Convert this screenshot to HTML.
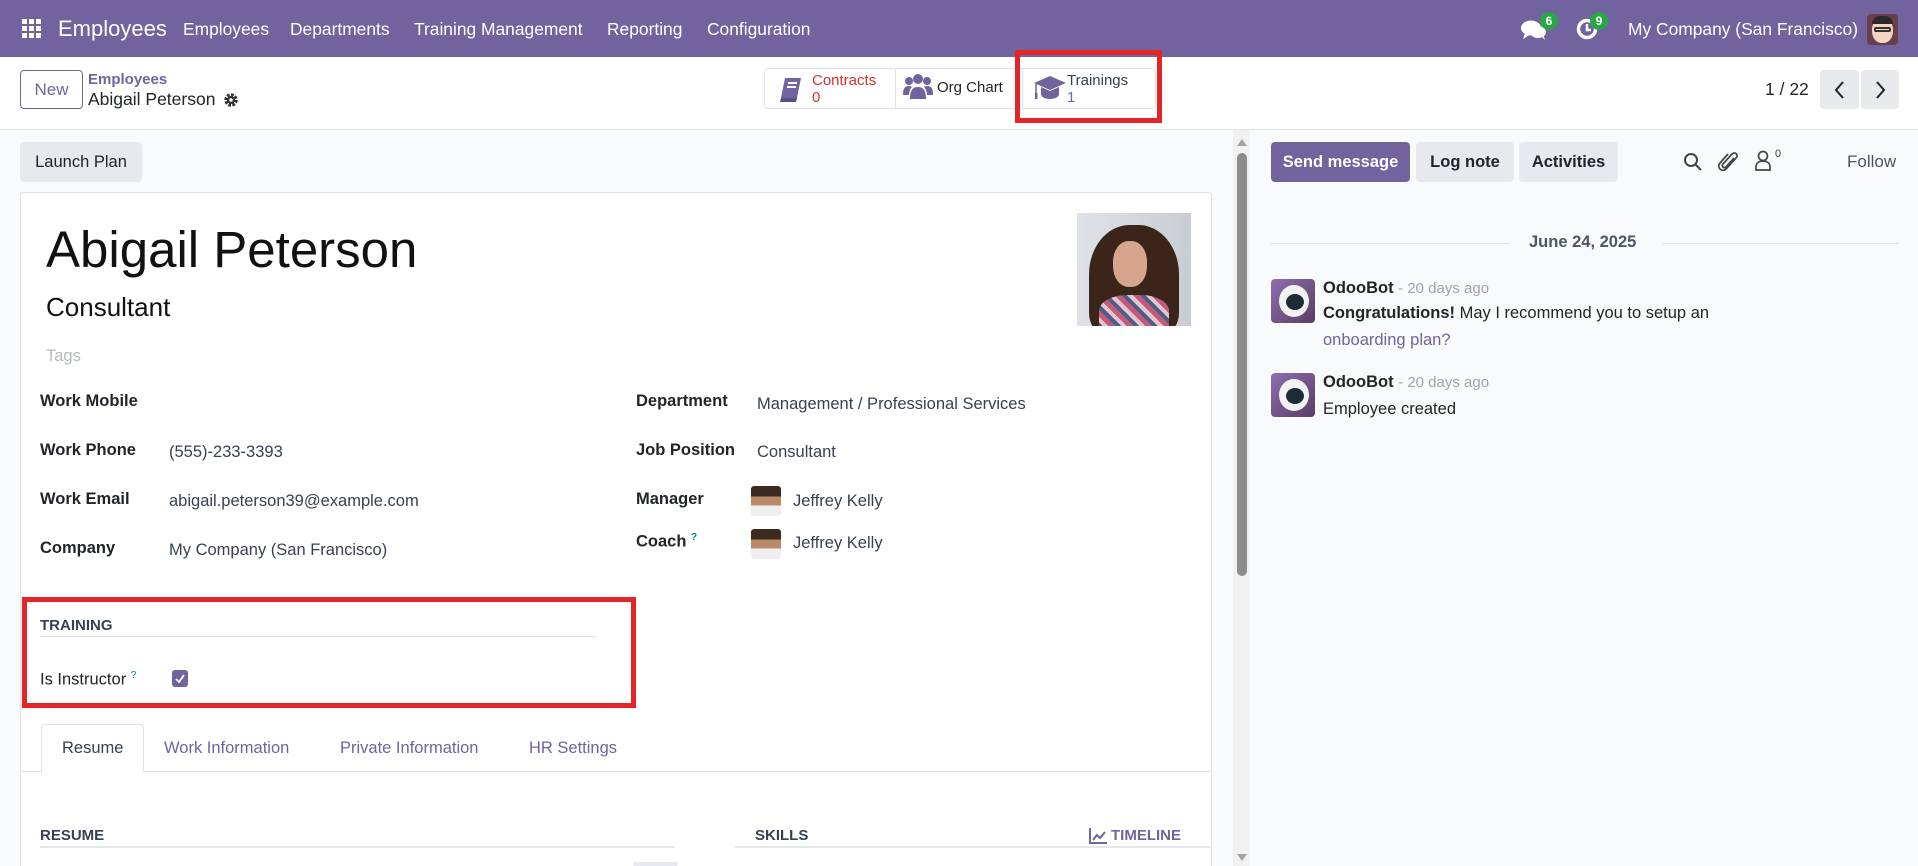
<!DOCTYPE html>
<html><head><meta charset="utf-8"><style>
*{box-sizing:border-box;margin:0;padding:0}
html{width:1918px;height:866px;overflow:hidden}
body{width:1918px;height:866px;overflow:hidden;font-family:"Liberation Sans",sans-serif;color:#212529;background:#f9fafb;position:relative;font-size:16.5px}
.a{position:absolute;white-space:nowrap}
.nav{position:absolute;left:0;top:0;width:1918px;height:57px;background:#71639e;color:#fff}
.nav .a{font-size:17.4px;top:19px}
.cp{position:absolute;left:0;top:57px;width:1918px;height:73px;background:#fff;border-bottom:1px solid #dee2e6}
.btn2{position:absolute;background:#e7e9ed;border-radius:4px;font-size:16.5px;color:#212529;text-align:center}
.lbl{font-weight:bold;font-size:16.5px}
.val{font-size:16.5px;color:#374151}
.badge{position:absolute;background:#28a745;color:#fff;font-size:12px;border-radius:9px;width:18px;height:18px;text-align:center;line-height:18px;font-weight:bold}
.pp{position:absolute;width:30px;height:30px;border-radius:3px;background:linear-gradient(#3a2a20 0 35%,#b88a6a 35% 65%,#eee 65%)}
.bot{position:absolute;width:44px;height:44px;border-radius:4px;background:linear-gradient(135deg,#8d6fb0,#5a3d63)}
.bot:before{content:"";position:absolute;left:8px;top:6px;width:30px;height:32px;border-radius:50%;background:#f2f2f2}
.bot:after{content:"";position:absolute;left:15px;top:15px;width:18px;height:16px;border-radius:50%;background:#1d2b36}
</style></head><body>
<div class="nav">
 <svg class="a" style="left:22px;top:19px" width="20" height="20" viewBox="0 0 20 20" fill="#fff"><rect x="0" y="0" width="5" height="5"/><rect x="7" y="0" width="5" height="5"/><rect x="14" y="0" width="5" height="5"/><rect x="0" y="7" width="5" height="5"/><rect x="7" y="7" width="5" height="5"/><rect x="14" y="7" width="5" height="5"/><rect x="0" y="14" width="5" height="5"/><rect x="7" y="14" width="5" height="5"/><rect x="14" y="14" width="5" height="5"/></svg>
 <div class="a" style="left:58px;top:16px;font-size:22px">Employees</div>
 <div class="a" style="left:183px">Employees</div>
 <div class="a" style="left:290px">Departments</div>
 <div class="a" style="left:414px">Training Management</div>
 <div class="a" style="left:607px">Reporting</div>
 <div class="a" style="left:707px">Configuration</div>
 <svg class="a" style="left:1521px;top:19px" width="26" height="22" viewBox="0 0 26 22" fill="#fff"><ellipse cx="10" cy="9" rx="10" ry="7.5"/><path d="M4 14 L2 20 L10 15Z"/><ellipse cx="17" cy="13" rx="8" ry="6"/><path d="M20 17 L24 21 L22 15Z"/></svg>
 <div class="badge" style="left:1540px;top:12px">6</div>
 <svg class="a" style="left:1576px;top:18px" width="22" height="22" viewBox="0 0 22 22"><circle cx="11" cy="11" r="8.5" fill="none" stroke="#fff" stroke-width="3.5"/><path d="M11 6v6h4" stroke="#fff" stroke-width="2.5" fill="none"/></svg>
 <div class="badge" style="left:1590px;top:12px">9</div>
 <div class="a" style="left:1628px">My Company (San Francisco)</div>
 <div class="a" style="left:1867px;top:14px;width:31px;height:31px;border-radius:4px;background:#6b3d4c">
  <div style="position:absolute;left:5px;top:3px;width:21px;height:26px;border-radius:50% 50% 45% 45%;background:#f3d6c0"></div>
  <div style="position:absolute;left:5px;top:2px;width:21px;height:8px;border-radius:8px 8px 0 0;background:#2a2a2a"></div>
  <div style="position:absolute;left:7px;top:13px;width:17px;height:5px;border:2px solid #333;border-radius:2px"></div>
 </div>
</div>
<div class="cp">
 <div class="a" style="left:20px;top:13px;width:63px;height:39px;border:1px solid #71639e;border-radius:4px;color:#71639e;text-align:center;line-height:37px;font-size:17px">New</div>
 <div class="a" style="left:88px;top:14px;color:#71639e;font-weight:bold;font-size:15px">Employees</div>
 <div class="a" style="left:88px;top:32px;font-size:17.5px">Abigail Peterson</div>
 <svg class="a" style="left:223px;top:35px" width="16" height="16" viewBox="0 0 16 16"><circle cx="8" cy="8" r="5" fill="none" stroke="#333" stroke-width="3.5" stroke-dasharray="2.6 1.3"/><circle cx="8" cy="8" r="4" fill="#333"/><circle cx="8" cy="8" r="1.8" fill="#fff"/></svg>
 <div class="a" style="left:764px;top:11px;width:392px;height:41px;border:1px solid #dee2e6;border-radius:4px"></div>
 <div class="a" style="left:895px;top:12px;width:1px;height:39px;background:#dee2e6"></div>
 <div class="a" style="left:1022px;top:12px;width:1px;height:39px;background:#dee2e6"></div>
 <svg class="a" style="left:779px;top:20px" width="24" height="26" viewBox="0 0 24 26"><path d="M6 1h16l-4 20H2z" fill="#71639e"/><path d="M2 21h16l-1 4H1z" fill="#5a4f85"/><path d="M9 6h9M8 10h9" stroke="#fff" stroke-width="2"/></svg>
 <div class="a" style="left:812px;top:15px;color:#d9302f;font-size:15px;line-height:17px">Contracts<br>0</div>
 <svg class="a" style="left:903px;top:16px" width="30" height="26" viewBox="0 0 30 26" fill="#71639e"><circle cx="15" cy="6" r="5"/><circle cx="6" cy="8" r="4"/><circle cx="24" cy="8" r="4"/><path d="M7 26c0-9 3-12 8-12s8 3 8 12z"/><path d="M0 22c0-7 2-9 6-9 2 0 3 1 3 1-2 2-3 5-3 8z"/><path d="M30 22c0-7-2-9-6-9-2 0-3 1-3 1 2 2 3 5 3 8z"/></svg>
 <div class="a" style="left:937px;top:22px;font-size:15px">Org Chart</div>
 <svg class="a" style="left:1033px;top:17px" width="34" height="28" viewBox="0 0 34 28" fill="#71639e"><path d="M17 2L33 9 17 16 1 9z"/><path d="M8 13v7c0 3 4 5 9 5s9-2 9-5v-7l-9 4z"/><path d="M3 10v10" stroke="#71639e" stroke-width="1.5"/><rect x="2" y="19" width="2.5" height="6"/></svg>
 <div class="a" style="left:1067px;top:15px;color:#374151;font-size:15px;line-height:17px">Trainings<br><span style="color:#71639e">1</span></div>
 <div class="a" style="left:1765px;top:22px;font-size:17.5px">1 / 22</div>
 <div class="btn2" style="left:1820px;top:13px;width:39px;height:39px"></div>
 <div class="btn2" style="left:1861px;top:13px;width:38px;height:39px"></div>
 <svg class="a" style="left:1833px;top:23px" width="14" height="20" viewBox="0 0 14 20"><path d="M10 2L3 10l7 8" fill="none" stroke="#222" stroke-width="2"/></svg>
 <svg class="a" style="left:1873px;top:23px" width="14" height="20" viewBox="0 0 14 20"><path d="M4 2l7 8-7 8" fill="none" stroke="#222" stroke-width="2"/></svg>
</div>
<div class="a" style="left:1015px;top:50px;width:147px;height:73px;border:5px solid #e52428"></div>

<div class="btn2" style="left:20px;top:142px;width:122px;height:40px;line-height:40px">Launch Plan</div>
<div class="a" style="left:20px;top:192px;width:1192px;height:680px;background:#fff;border:1px solid #dee2e6;border-radius:4px"></div>
<div class="a" style="left:46px;top:220px;font-size:51px;color:#111">Abigail Peterson</div>
<div class="a" style="left:46px;top:292px;font-size:26px;color:#111">Consultant</div>
<div class="a" style="left:46px;top:347px;font-size:16.5px;color:#b4b9c0">Tags</div>
<div class="a" style="left:1077px;top:213px;width:114px;height:113px;background:linear-gradient(90deg,#dfe2e6,#c9cdd3);overflow:hidden">
 <div style="position:absolute;left:12px;top:12px;width:90px;height:110px;border-radius:45% 45% 20% 20%;background:#3b2419"></div>
 <div style="position:absolute;left:36px;top:28px;width:34px;height:46px;border-radius:45%;background:#d7a58d"></div>
 <div style="position:absolute;left:22px;top:82px;width:70px;height:40px;border-radius:40% 40% 0 0;background:repeating-linear-gradient(45deg,#c45a77 0 5px,#4b5d88 5px 9px,#e3c6d0 9px 13px)"></div>
</div>

<div class="a lbl" style="left:40px;top:392px">Work Mobile</div>
<div class="a lbl" style="left:40px;top:441px">Work Phone</div>
<div class="a val" style="left:169px;top:443px">(555)-233-3393</div>
<div class="a lbl" style="left:40px;top:490px">Work Email</div>
<div class="a val" style="left:169px;top:492px">abigail.peterson39@example.com</div>
<div class="a lbl" style="left:40px;top:539px">Company</div>
<div class="a val" style="left:169px;top:541px">My Company (San Francisco)</div>
<div class="a lbl" style="left:636px;top:392px">Department</div>
<div class="a val" style="left:757px;top:395px">Management / Professional Services</div>
<div class="a lbl" style="left:636px;top:441px">Job Position</div>
<div class="a val" style="left:757px;top:443px">Consultant</div>
<div class="a lbl" style="left:636px;top:490px">Manager</div>
<div class="pp" style="left:751px;top:486px"></div>
<div class="a val" style="left:793px;top:492px">Jeffrey Kelly</div>
<div class="a lbl" style="left:636px;top:532px">Coach <sup style="color:#017e84;font-size:10px">?</sup></div>
<div class="pp" style="left:751px;top:529px"></div>
<div class="a val" style="left:793px;top:534px">Jeffrey Kelly</div>

<div class="a" style="left:22px;top:597px;width:614px;height:111px;border:5px solid #e52428"></div>
<div class="a" style="left:40px;top:617px;font-weight:bold;font-size:15px;color:#374151">TRAINING</div>
<div class="a" style="left:40px;top:636px;width:556px;height:1px;background:#dee2e6"></div>
<div class="a" style="left:40px;top:670px;font-size:16.5px">Is Instructor <sup style="color:#017e84;font-size:10px">?</sup></div>
<div class="a" style="left:172px;top:670px;width:16px;height:17px;border-radius:3px;background:#71639e"></div>
<svg class="a" style="left:174px;top:673px" width="12" height="11" viewBox="0 0 12 11"><path d="M2 6l3 3 5-7" fill="none" stroke="#fff" stroke-width="1.8"/></svg>

<div class="a" style="left:20px;top:771px;width:1191px;height:1px;background:#dee2e6"></div>
<div class="a" style="left:41px;top:724px;width:103px;height:48px;background:#fff;border:1px solid #dee2e6;border-bottom:none;border-radius:4px 4px 0 0"></div>
<div class="a" style="left:62px;top:739px;font-size:16.5px;color:#374151">Resume</div>
<div class="a" style="left:164px;top:739px;font-size:16.5px;color:#71639e">Work Information</div>
<div class="a" style="left:340px;top:739px;font-size:16.5px;color:#71639e">Private Information</div>
<div class="a" style="left:529px;top:739px;font-size:16.5px;color:#71639e">HR Settings</div>
<div class="a" style="left:40px;top:827px;font-weight:bold;font-size:15px;color:#374151">RESUME</div>
<div class="a" style="left:40px;top:846px;width:635px;height:2px;background:#e5e7eb"></div>
<div class="a" style="left:755px;top:827px;font-weight:bold;font-size:15px;color:#374151">SKILLS</div>
<div class="a" style="left:735px;top:846px;width:476px;height:2px;background:#e5e7eb"></div>
<svg class="a" style="left:1089px;top:828px" width="18" height="16" viewBox="0 0 18 16"><path d="M1 0v15h17" fill="none" stroke="#71639e" stroke-width="2"/><path d="M4 12l4-5 3 3 5-6" fill="none" stroke="#71639e" stroke-width="2"/></svg>
<div class="a" style="left:1111px;top:827px;font-weight:bold;font-size:15px;color:#71639e">TIMELINE</div>
<div class="a" style="left:633px;top:862px;width:45px;height:4px;background:#e7e9ed;border-radius:3px"></div>

<div class="a" style="left:1233px;top:130px;width:17px;height:736px;background:#f1f1f1"></div>
<svg class="a" style="left:1236px;top:137px" width="12" height="10"><path d="M1 9L6 2l5 7z" fill="#a3a3a3"/></svg>
<div class="a" style="left:1237px;top:153px;width:10px;height:423px;background:#8c8c8c;border-radius:5px"></div>
<svg class="a" style="left:1236px;top:853px" width="12" height="10"><path d="M1 1l5 7 5-7z" fill="#a3a3a3"/></svg>

<div class="a" style="left:1271px;top:142px;width:139px;height:40px;background:#71639e;border-radius:4px;color:#fff;font-weight:bold;text-align:center;line-height:40px;font-size:16.5px">Send message</div>
<div class="btn2" style="left:1416px;top:142px;width:98px;height:40px;line-height:40px;font-weight:bold">Log note</div>
<div class="btn2" style="left:1519px;top:142px;width:99px;height:40px;line-height:40px;font-weight:bold">Activities</div>
<svg class="a" style="left:1683px;top:152px" width="20" height="20" viewBox="0 0 20 20"><circle cx="8" cy="8" r="6" fill="none" stroke="#444" stroke-width="2"/><path d="M12.5 12.5L18 18" stroke="#444" stroke-width="2"/></svg>
<svg class="a" style="left:1718px;top:150px" width="22" height="24" viewBox="0 0 22 24"><path d="M16 8l-8 9c-2 2-5-1-3-3l9-10c3-3 7 1 4 4l-10 11c-4 4-10-2-6-6l8-9" fill="none" stroke="#444" stroke-width="1.7"/></svg>
<svg class="a" style="left:1754px;top:150px" width="18" height="22" viewBox="0 0 18 22"><circle cx="9" cy="6" r="4.5" fill="none" stroke="#444" stroke-width="1.7"/><path d="M2 20v-3c0-4 3-6 7-6s7 2 7 6v3z" fill="none" stroke="#444" stroke-width="1.7"/></svg>
<div class="a" style="left:1775px;top:148px;font-size:11px;color:#444">0</div>
<div class="a" style="left:1847px;top:152px;font-size:17px;color:#4b5563">Follow</div>

<div class="a" style="left:1271px;top:243px;width:238px;height:1px;background:#dee2e6"></div>
<div class="a" style="left:1663px;top:243px;width:236px;height:1px;background:#dee2e6"></div>
<div class="a" style="left:1529px;top:233px;font-weight:bold;font-size:16.5px;color:#4b5563">June 24, 2025</div>

<div class="bot" style="left:1271px;top:279px"></div>
<div class="a" style="left:1323px;top:279px;font-size:16.5px"><b>OdooBot</b> <span style="color:#9ca3af;font-size:15px">- 20 days ago</span></div>
<div class="a" style="left:1323px;top:304px;font-size:16.5px"><b>Congratulations!</b> May I recommend you to setup an</div>
<div class="a" style="left:1323px;top:331px;font-size:16.5px;color:#71639e">onboarding plan?</div>
<div class="bot" style="left:1271px;top:373px"></div>
<div class="a" style="left:1323px;top:373px;font-size:16.5px"><b>OdooBot</b> <span style="color:#9ca3af;font-size:15px">- 20 days ago</span></div>
<div class="a" style="left:1323px;top:400px;font-size:16.5px">Employee created</div>
</body></html>
